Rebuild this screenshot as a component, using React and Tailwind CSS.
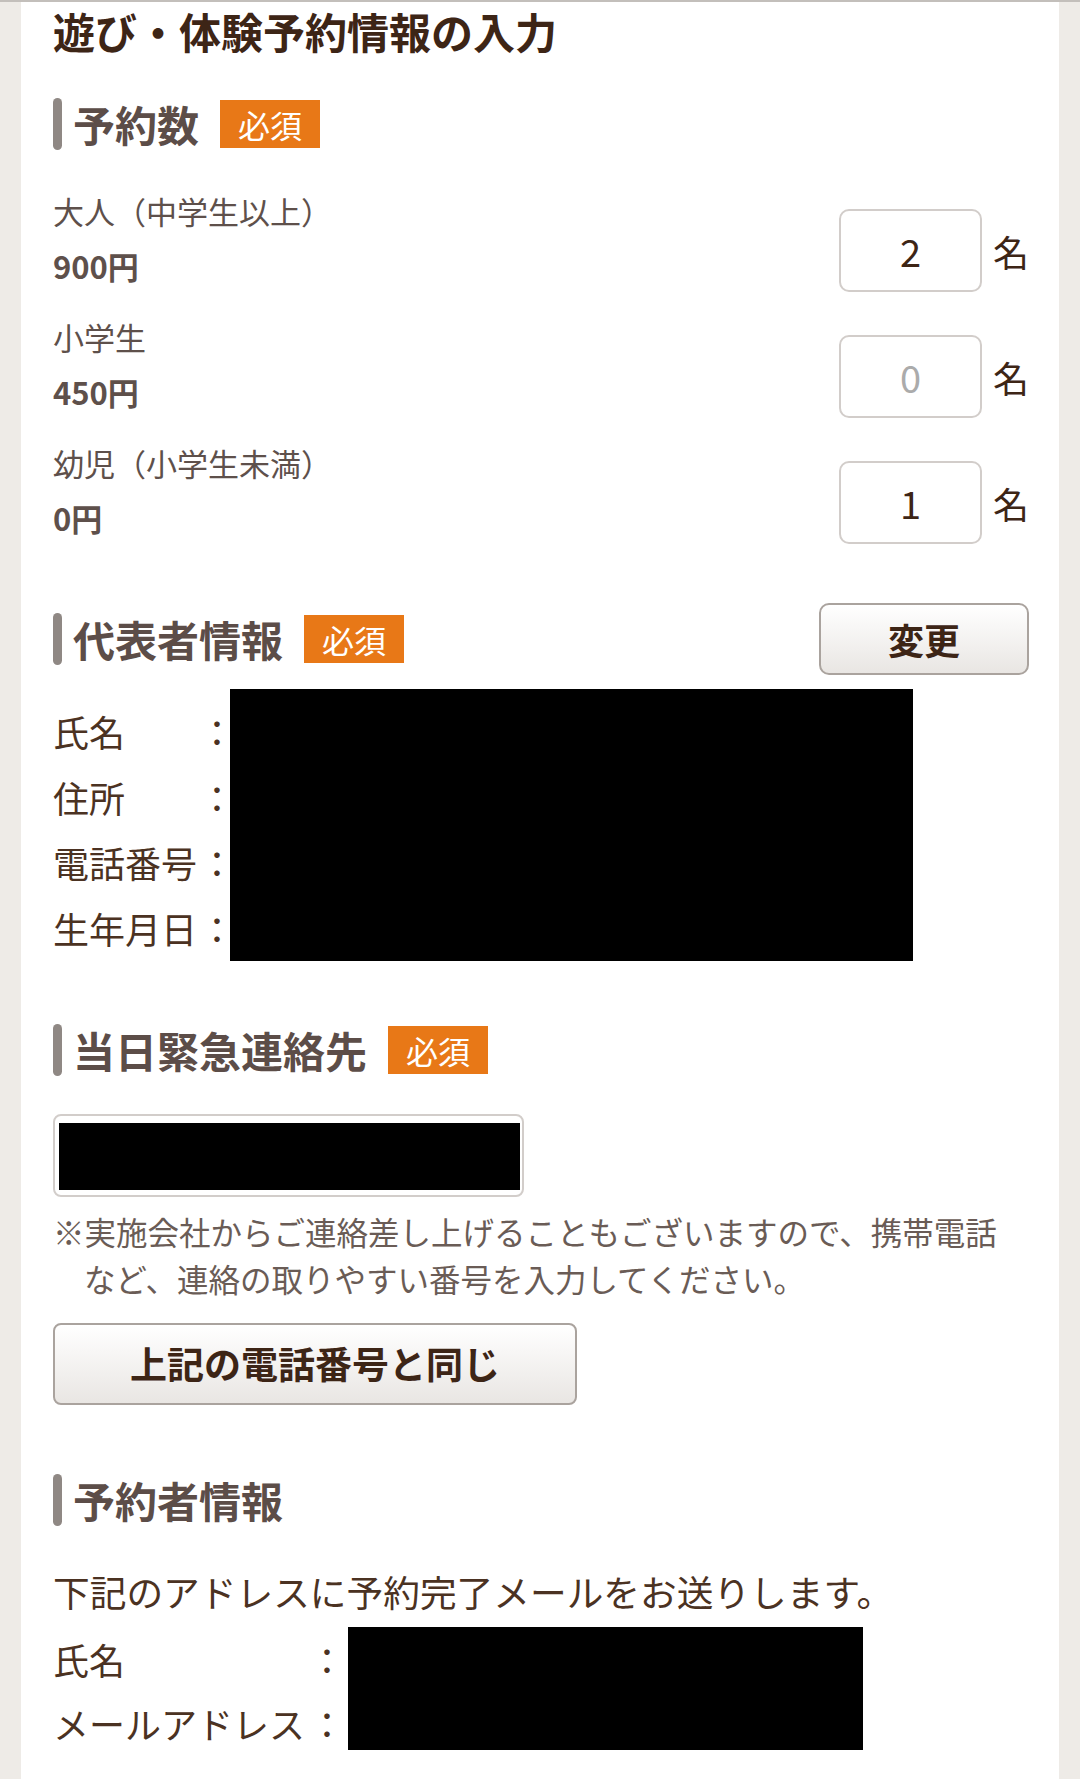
import { useState } from 'react';

const counts = [
    { label: '大人（中学生以上）', price: '900円', value: '2' },
    { label: '小学生', price: '450円', value: '' },
    { label: '幼児（小学生未満）', price: '0円', value: '1' },
];

const rep = ['氏名', '住所', '電話番号', '生年月日'];

function Heading({ title, required }) {
    return (
        <div className="flex items-center h-[52px]">
            <div className="w-[9px] h-[52px] rounded-full bg-[#8f8884]" />
            <h2 className="ml-[11px] text-[42px] leading-[52px] font-bold text-[#5c4d48]">{title}</h2>
            {required && (
                <span className="ml-[21px] h-[48px] px-[18px] flex items-center bg-[#e87817] text-white text-[32px] leading-none">
                    必須
                </span>
            )}
        </div>
    );
}

export default function App() {
    const [vals, setVals] = useState(counts.map((c) => c.value));

    return (
        <div className="min-h-screen bg-[#eeebe7] border-t-2 border-[#c3bfbb] font-['Noto_Sans_CJK_JP',sans-serif]">
            <div className="mx-[21px] min-h-[1777px] bg-white pl-[32px] pr-[30px] pt-[4px]">
                <h1 className="text-[42px] leading-[50px] font-bold text-[#3d2516]">遊び・体験予約情報の入力</h1>

                {/* 予約数 */}
                <div className="mt-[42px]">
                    <Heading title="予約数" required />
                </div>
                <div className="mt-[39px]">
                    {counts.map((c, i) => (
                        <div key={i} className="flex items-start justify-between mb-[23px] last:mb-0">
                            <div className="text-[31px] text-[#5e504b]">
                                <div className="leading-[44px]">{c.label}</div>
                                <div className="leading-[44px] mt-[11px] font-bold">{c.price}</div>
                            </div>
                            <div className="flex items-center mt-[20px]">
                                <input
                                    type="text"
                                    value={vals[i]}
                                    placeholder="0"
                                    onChange={(e) => {
                                        const next = [...vals];
                                        next[i] = e.target.value;
                                        setVals(next);
                                    }}
                                    className="w-[143px] h-[83px] rounded-[10px] border-2 border-[#d2cdca] text-center text-[38px] text-[#3d2516] placeholder:text-[#ababab] outline-none"
                                />
                                <span className="ml-[11px] text-[36px] text-[#3d2516] leading-none">名</span>
                            </div>
                        </div>
                    ))}
                </div>

                {/* 代表者情報 */}
                <div className="mt-[59px] flex items-center justify-between h-[72px]">
                    <Heading title="代表者情報" required />
                    <button className="w-[210px] h-[72px] rounded-[10px] border-2 border-[#aaa39e] bg-linear-to-b from-white to-[#e9e6e3] text-[36px] font-bold text-[#3d2516]">
                        変更
                    </button>
                </div>
                <div className="mt-[14px] flex items-start">
                    <div className="mt-[10px] text-[36px] text-[#4b3222]">
                        {rep.map((r) => (
                            <div key={r} className="flex leading-[65.5px]">
                                <span className="w-[146px]">{r}</span>
                                <span className="w-[31px]">：</span>
                            </div>
                        ))}
                    </div>
                    <div className="w-[683px] h-[272px] bg-black" />
                </div>

                {/* 当日緊急連絡先 */}
                <div className="mt-[63px]">
                    <Heading title="当日緊急連絡先" required />
                </div>
                <div className="mt-[38px] w-[471px] h-[83px] rounded-[8px] border-2 border-[#d2cdca] pl-[4px] pr-[2px] pt-[7px] pb-[5px]">
                    <div className="w-full h-full bg-black" />
                </div>
                <p className="mt-[11px] text-[31.5px] leading-[47px] text-[#6a5c56]">
                    ※実施会社からご連絡差し上げることもございますので、携帯電話
                    <br />
                    <span className="pl-[31px]">など、連絡の取りやすい番号を入力してください。</span>
                </p>
                <button className="mt-[21px] w-[524px] h-[82px] rounded-[8px] border-2 border-[#aaa39e] bg-linear-to-b from-white to-[#e9e6e3] text-[37px] font-bold text-[#3d2516]">
                    上記の電話番号と同じ
                </button>

                {/* 予約者情報 */}
                <div className="mt-[69px]">
                    <Heading title="予約者情報" />
                </div>
                <p className="mt-[33px] text-[36.7px] leading-[64px] text-[#4b3222]">
                    下記のアドレスに予約完了メールをお送りします。
                </p>
                <div className="mt-[4px] flex items-start">
                    <div className="text-[36px] text-[#4b3222]">
                        {['氏名', 'メールアドレス'].map((r) => (
                            <div key={r} className="flex leading-[64px]">
                                <span className="w-[256px]">{r}</span>
                                <span className="w-[39px]">：</span>
                            </div>
                        ))}
                    </div>
                    <div className="w-[515px] h-[123px] bg-black" />
                </div>
            </div>
        </div>
    );
}
